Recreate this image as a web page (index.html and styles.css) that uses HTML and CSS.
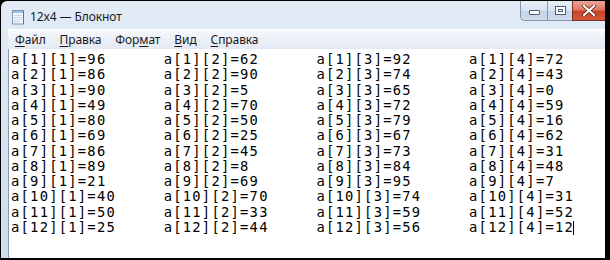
FILE: index.html
```html
<!DOCTYPE html>
<html lang="ru">
<head>
    <meta charset="UTF-8">
    <title>12x4 — Блокнот</title>
    <link rel="stylesheet" href="styles.css">
</head>
<body>
    <div class="window">
        <div class="titlebar">
            <svg class="app-icon" width="16" height="16" viewBox="0 0 16 16">
                <rect x="2.5" y="1.5" width="11" height="13.5" fill="#f4f8fc" stroke="#7f93aa"/>
                <rect x="3" y="2" width="10" height="2" fill="#9fc0e4"/>
                <line x1="4" y1="6.5" x2="12" y2="6.5" stroke="#c6d4e4"/>
                <line x1="4" y1="8.5" x2="12" y2="8.5" stroke="#c6d4e4"/>
                <line x1="4" y1="10.5" x2="12" y2="10.5" stroke="#c6d4e4"/>
                <line x1="4" y1="12.5" x2="10" y2="12.5" stroke="#c6d4e4"/>
                <line x1="13.5" y1="2" x2="13.5" y2="15" stroke="#5c7290"/>
            </svg>
            <span class="title">12x4 — Блокнот</span>
            <div class="caption-buttons">
                <div class="cap-btn cap-min"><span class="min-glyph"></span></div>
                <div class="cap-btn cap-max"><span class="max-glyph"></span></div>
                <div class="cap-btn cap-close">
                    <svg width="14" height="11" viewBox="0 0 14 11">
                        <path d="M2 1 L12 10 M12 1 L2 10" stroke="#5a1a10" stroke-width="3.6" stroke-linecap="round"/>
                        <path d="M2 1 L12 10 M12 1 L2 10" stroke="#ffffff" stroke-width="2.2" stroke-linecap="round"/>
                    </svg>
                </div>
            </div>
        </div>
        <div class="frame">
            <div class="menubar">
                <span class="menu-item"><u>Ф</u>айл</span>
                <span class="menu-item"><u>П</u>равка</span>
                <span class="menu-item">Фор<u>м</u>ат</span>
                <span class="menu-item"><u>В</u>ид</span>
                <span class="menu-item"><u>С</u>правка</span>
            </div>
            <div class="client">
                <div class="editor">
                    <span>a[1][1]=96</span><span>a[1][2]=62</span><span>a[1][3]=92</span><span>a[1][4]=72</span>
                    <span>a[2][1]=86</span><span>a[2][2]=90</span><span>a[2][3]=74</span><span>a[2][4]=43</span>
                    <span>a[3][1]=90</span><span>a[3][2]=5</span><span>a[3][3]=65</span><span>a[3][4]=0</span>
                    <span>a[4][1]=49</span><span>a[4][2]=70</span><span>a[4][3]=72</span><span>a[4][4]=59</span>
                    <span>a[5][1]=80</span><span>a[5][2]=50</span><span>a[5][3]=79</span><span>a[5][4]=16</span>
                    <span>a[6][1]=69</span><span>a[6][2]=25</span><span>a[6][3]=67</span><span>a[6][4]=62</span>
                    <span>a[7][1]=86</span><span>a[7][2]=45</span><span>a[7][3]=73</span><span>a[7][4]=31</span>
                    <span>a[8][1]=89</span><span>a[8][2]=8</span><span>a[8][3]=84</span><span>a[8][4]=48</span>
                    <span>a[9][1]=21</span><span>a[9][2]=69</span><span>a[9][3]=95</span><span>a[9][4]=7</span>
                    <span>a[10][1]=40</span><span>a[10][2]=70</span><span>a[10][3]=74</span><span>a[10][4]=31</span>
                    <span>a[11][1]=50</span><span>a[11][2]=33</span><span>a[11][3]=59</span><span>a[11][4]=52</span>
                    <span>a[12][1]=25</span><span>a[12][2]=44</span><span>a[12][3]=56</span><span>a[12][4]=12<i class="caret"></i></span>
                </div>
                <div class="scrollbar">
                    <div class="scroll-up">
                        <svg width="7" height="4" viewBox="0 0 7 4"><path d="M0 4 L3.5 0 L7 4 Z" fill="#c4c9d0"/></svg>
                    </div>
                </div>
            </div>
        </div>
    </div>
</body>
</html>
```

FILE: styles.css
```css
* {
    margin: 0;
    padding: 0;
    box-sizing: border-box;
}

body {
    background: #000000;
    width: 610px;
    height: 260px;
    overflow: hidden;
}

.window {
    margin: 1px 5px 2px 1px;
    width: 604px;
    height: 257px;
    border-top-left-radius: 6px;
    background: linear-gradient(180deg, #e2ebf6 0%, #d5e2f1 60%, #cddcee 100%);
    display: flex;
    flex-direction: column;
    overflow: hidden;
}

/* title bar */
.titlebar {
    height: 28px;
    display: flex;
    align-items: center;
    flex-shrink: 0;
}

.app-icon {
    margin-left: 9px;
    margin-top: 4px;
}

.title {
    margin-left: 4px;
    margin-top: 3px;
    font-family: "Noto Sans", "Open Sans", sans-serif;
    font-size: 12px;
    color: #1a1a1a;
    letter-spacing: -0.1px;
}

.caption-buttons {
    margin-left: auto;
    align-self: flex-start;
    display: flex;
    height: 20px;
}

.cap-btn {
    height: 20px;
    display: flex;
    align-items: center;
    justify-content: center;
    border: 1px solid #8395ab;
    border-top: none;
}

.cap-min {
    width: 27px;
    border-bottom-left-radius: 5px;
    border-right: none;
    background: linear-gradient(180deg, #e9f0f8 0%, #d8e3f0 50%, #c3d3e6 51%, #cfdcec 100%);
}

.cap-max {
    width: 25px;
    border-right: none;
    background: linear-gradient(180deg, #e9f0f8 0%, #d8e3f0 50%, #c3d3e6 51%, #cfdcec 100%);
}

.cap-close {
    width: 33px;
    border-color: #7a2f24;
    border-right: none;
    background: linear-gradient(180deg, #e9a493 0%, #dc7a64 45%, #c7432c 55%, #d5573b 100%);
}

.min-glyph {
    width: 11px;
    height: 5px;
    margin-top: 4px;
    background: #ffffff;
    border: 1px solid #4f5c6e;
    border-radius: 1px;
}

.max-glyph {
    width: 11px;
    height: 9px;
    border: 1px solid #4f5c6e;
    background: #ffffff;
    box-shadow: inset 0 0 0 2px #ffffff, inset 0 0 0 3px #4f5c6e;
}

/* frame around menu and client */
.frame {
    flex: 1;
    display: flex;
    flex-direction: column;
    padding-left: 7px;
    min-height: 0;
}

.menubar {
    height: 20px;
    display: flex;
    align-items: center;
    background: linear-gradient(180deg, #f7f9fc 0%, #ebf0f8 50%, #e3e9f4 100%);
    border-top: 1px solid #ffffff;
    font-family: "Noto Sans", "Open Sans", sans-serif;
    font-size: 12px;
    color: #1a1a1a;
    flex-shrink: 0;
}

.menu-item {
    padding: 0 7px;
    letter-spacing: -0.1px;
}

.menu-item u {
    text-decoration: underline;
    text-underline-offset: 2px;
}

.client {
    flex: 1;
    display: flex;
    background: #ffffff;
    border-left: 1px solid #8a99ab;
    min-height: 0;
}

.editor {
    flex: 1;
    display: grid;
    grid-template-columns: repeat(4, 152.7px);
    grid-auto-rows: 15.27px;
    align-content: start;
    padding: 3px 0 0 2px;
    font-family: "DejaVu Sans Mono", "Liberation Mono", monospace;
    font-size: 13.8px;
    line-height: 15.27px;
    letter-spacing: 1.24px;
    color: #000000;
    white-space: pre;
}

.caret {
    display: inline-block;
    width: 1px;
    height: 14px;
    margin-left: -1px;
    vertical-align: -3px;
    background: #000000;
}

.scrollbar {
    width: 7px;
    background: linear-gradient(90deg, #ececec 0%, #f6f6f6 100%);
    border-left: 1px solid #e2e2e2;
}

.scroll-up {
    height: 17px;
    display: flex;
    align-items: center;
    justify-content: flex-end;
    padding-top: 4px;
}
```
